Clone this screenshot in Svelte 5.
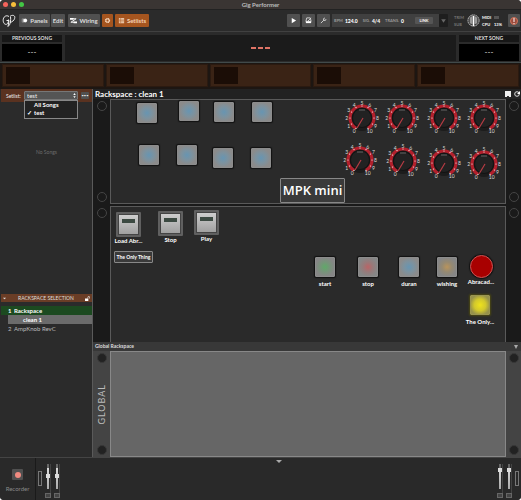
<script>
  let setlist = 'test';
  const setlists = ['All Songs', 'test'];
  const parts = [1, 2, 3, 4, 5];

  // Widgets sit on a free canvas, positions are relative to the panel
  const pads = [
    { x: 26, y: 3 }, { x: 68, y: 1 }, { x: 103, y: 2 }, { x: 141, y: 2 },
    { x: 28, y: 45 }, { x: 66, y: 45 }, { x: 102, y: 48 }, { x: 140, y: 48 }
  ];

  const knobs = [
    { x: 251, y: 18 }, { x: 291, y: 18 }, { x: 333, y: 18 }, { x: 373, y: 18 },
    { x: 249, y: 60 }, { x: 292, y: 61 }, { x: 333, y: 63 }, { x: 373, y: 64 }
  ];

  const switches = [
    { x: 5, y: 5, label: 'Load Abr...' },
    { x: 47, y: 4, label: 'Stop' },
    { x: 83, y: 3, label: 'Play' }
  ];

  const triggers = [
    { x: 204, y: 50, color: 'green', label: 'start' },
    { x: 247, y: 50, color: 'red', label: 'stop' },
    { x: 288, y: 50, color: 'blue', label: 'duran' },
    { x: 326, y: 50, color: 'amber', label: 'wishing' },
    { x: 360, y: 48, color: 'round', label: 'Abracad...' },
    { x: 359, y: 88, color: 'yellow', label: 'The Only...' }
  ];

  const ticks = Array.from({ length: 11 }, (_, i) => {
    const a = ((i * 30 - 150) * Math.PI) / 180;
    return { n: i, sin: Math.sin(a), cos: Math.cos(a) };
  });
</script>

<div class="window">
  <header class="titlebar">
    <span class="light close"></span>
    <span class="light minimize"></span>
    <span class="light zoom"></span>
    <h1>Gig Performer</h1>
  </header>

  <nav class="toolbar">
    <svg class="logo" viewBox="0 0 14 14">
      <path d="M7 2.5C4 .5 1 3 1.200 6.500 1.300 10 4 11.500 5.500 9.500 6.500 8 6.700 6.500 6.500 5.500M4.500 6.500h2.500L6 12.500C8.500 11 9 6 8.500 2.500M8.300 2c3-1.500 5-.3 4.400 2.300C12.200 6.500 10 8 8 8.500" />
    </svg>
    <div class="group">
      <button>
        <svg viewBox="0 0 8 8"><path d="M1 2h5v4H1z" fill="#ddd" /><circle cx="5" cy="4" r="2" fill="#fff" /><path d="M2 2v4" stroke="#555" /></svg>
        Panels
      </button>
      <button class="edit">Edit</button>
    </div>
    <button class="wiring">
      <svg viewBox="0 0 8 8"><path d="M0 1h4v2H0zM4 5h4v2H4z" fill="#fff" /><path d="M3 2h4L1 6h4" stroke="#fff" fill="none" /></svg>
      Wiring
    </button>
    <button class="orange gear" aria-label="Settings">
      <svg viewBox="0 0 8 8"><circle cx="4" cy="4" r="2.300" stroke="#f3d4b8" stroke-width="1.400" fill="none" stroke-dasharray="1.200 .5" /><circle cx="4" cy="4" r="1.700" stroke="#f3d4b8" fill="none" /></svg>
    </button>
    <button class="orange setlists">
      <svg viewBox="0 0 8 8"><path d="M1 1h6v6H1z" fill="#f3d4b8" /><path d="M1 2.500h6M1 4h6M1 5.500h6M3 1v6" stroke="#a5551f" stroke-width=".5" /></svg>
      Setlists
    </button>

    <div class="transport">
      <button aria-label="Play"><svg viewBox="0 0 8 8"><path d="M2 1l5 3-5 3z" fill="#fff" /></svg></button>
      <button aria-label="Metronome"><svg viewBox="0 0 8 8"><path d="M2 1h4l1 4H1z" fill="none" stroke="#ddd" /><path d="M1 5h6v2H1z" fill="#fff" /><path d="M3 5l4-4" stroke="#ddd" /></svg></button>
      <button aria-label="Tuner"><svg viewBox="0 0 8 8"><path d="M1 7l3-3M4 4l.300-2.500M4 4l2.500-.3M4.300 2L5.500 1M6 3.800L7 2.500" stroke="#ddd" fill="none" /></svg></button>
    </div>
    <div class="tempo">
      <span class="key">BPM</span><b>124.0</b>
      <span class="key gap">SIG.</span><b>4/4</b>
      <span class="key gap">TRANS.</span><b>0</b>
      <button class="link">LINK</button>
    </div>
    <button class="more" aria-label="More"><svg viewBox="0 0 6 6"><path d="M1 2h4L3 5z" fill="#666" /></svg></button>
    <div class="status">
      <div class="trim"><span>TRIM</span><span>SUB</span></div>
      <svg class="volume" viewBox="0 0 14 14">
        <circle cx="7" cy="7" r="6" fill="#3c3c3c" stroke="#c8c8c8" stroke-dasharray="2 .5" />
        <path d="M3 10V4l3-2v9zM8 2l3 2v6l-3 1z" fill="#999" />
        <path d="M7 2v11" stroke="#fff" stroke-width="1.500" />
      </svg>
      <div class="meters"><b>MIDI</b><i></i><b>CPU</b><b>13%</b></div>
    </div>
    <button class="panic" aria-label="Panic">
      <svg viewBox="0 0 10 10"><circle cx="5" cy="5" r="3.500" fill="#9b4a3d" stroke="#d0765c" /><path d="M5 2v4M5 7v1" stroke="#fff" /></svg>
    </button>
  </nav>

  <section class="songs">
    <div class="side">
      <h2>PREVIOUS SONG</h2>
      <p>---</p>
    </div>
    <div class="current"><span></span><span></span><span></span></div>
    <div class="side">
      <h2>NEXT SONG</h2>
      <p>---</p>
    </div>
  </section>

  <section class="parts">
    {#each parts as part (part)}
      <div class="part"><span></span></div>
    {/each}
  </section>

  <main>
    <aside>
      <div class="setlist-bar">
        <label for="setlist">Setlist:</label>
        <div class="picker">
          <select id="setlist" bind:value={setlist}>
            {#each setlists as name}
              <option>{name}</option>
            {/each}
          </select>
          <svg viewBox="0 0 4 8"><path d="M0 3l2-3 2 3zM0 5h4L2 8z" fill="#fff" /></svg>
          <ul class="menu">
            {#each setlists as name}
              <li><span>{name === setlist ? '✓' : ''}</span>{name}</li>
            {/each}
          </ul>
        </div>
        <button class="dots" aria-label="Setlist options">•••</button>
      </div>
      <p class="empty">No Songs</p>

      <div class="selection">
        <div class="selection-head">
          <svg viewBox="0 0 6 6"><path d="M1 2h4L3 4z" fill="#ddd" /></svg>
          <h2>RACKSPACE SELECTION</h2>
          <svg viewBox="0 0 6 6"><path d="M0 3h4v3H0z" fill="#fff" /><path d="M3.500 3V1.500a1 1 0 0 1 2 0V3" stroke="#fff" stroke-width=".8" fill="none" /></svg>
        </div>
        <ol>
          <li class="active"><span>1</span>Rackspace</li>
          <li class="variation">clean 1</li>
          <li><span>2</span>AmpKnob RevC</li>
        </ol>
      </div>
    </aside>

    <section class="rackspace">
      <div class="rack-title">
        <h2>Rackspace : clean 1</h2>
        <svg viewBox="0 0 6 6"><path d="M0 0h6v6H0z" fill="#eee" /><path d="M2 5h2v1H2z" fill="#333" /></svg>
        <svg viewBox="0 0 6 6"><circle cx="3" cy="3" r="2.300" stroke="#ddd" fill="none" /><path d="M3 3l3-3v3z" fill="#fff" /></svg>
      </div>

      <div class="rack">
        <div class="ear"><i></i><i></i></div>
        <div class="panel">
          {#each pads as pad}
            <button class="pad blue placed" aria-label="Pad" style="left: {pad.x}px; top: {pad.y}px"></button>
          {/each}
          {#each knobs as knob}
            <svg class="knob" viewBox="-18 -18 36 36" style="left: {knob.x}px; top: {knob.y}px">
              <circle r="13" fill="#1c1c1c" />
              <path d="M-6 10.400A12 12 0 1 1 6 10.400" fill="none" stroke="#b3202c" stroke-width="3.200" />
              <circle r="9.500" fill="#222" stroke="#121212" />
              <path d="M-3 -8h6" stroke="#777" stroke-width=".8" />
              <path d="M1 0L-5 10" stroke="#b83c44" stroke-width="1.200" />
              {#each ticks as t}
                <circle cx={t.sin * 12} cy={-t.cos * 12} r=".6" fill="#fff" />
                <text x={t.sin * 15.4} y={-t.cos * 15.4 + 2}>{t.n}</text>
              {/each}
            </svg>
          {/each}
          <div class="name-plate">MPK mini</div>
        </div>
        <div class="ear"><i></i><i></i></div>
      </div>

      <div class="rack grow">
        <div class="ear"><i></i></div>
        <div class="panel second">
          {#each switches as s}
            <label class="widget switch" style="left: {s.x}px; top: {s.y}px">
              <button aria-label={s.label}><i></i></button>
              {s.label}
            </label>
          {/each}
          <div class="text-plate">The Only Thing</div>
          {#each triggers as t}
            <label class="widget" style="left: {t.x}px; top: {t.y}px">
              <button class="pad {t.color}" aria-label={t.label}></button>
              {t.label}
            </label>
          {/each}
        </div>
        <div class="ear"><i></i></div>
      </div>

      <div class="global-head">
        <h2>Global Rackspace</h2>
        <svg viewBox="0 0 6 6"><path d="M1 1h4L3 5z" fill="#aaa" /></svg>
      </div>
      <div class="rack global">
        <div class="ear"><i></i><span>GLOBAL</span><i></i></div>
        <div class="panel"></div>
        <div class="ear"><i></i><i></i></div>
      </div>
    </section>
  </main>

  <footer>
    <div class="recorder">
      <button aria-label="Record"><i></i></button>
      Recorder
    </div>
    <div class="mixer">
      <span class="tag"></span>
      <div class="fader"><i class="mid"></i><b></b></div>
      <div class="fader"><i class="mid"></i><b></b></div>
    </div>
    <svg class="drawer" viewBox="0 0 6 4"><path d="M0 0h6L3 3z" fill="#aaa" /></svg>
    <div class="mixer">
      <div class="fader"><i></i><b></b></div>
      <div class="fader"><i></i><b></b></div>
      <span class="tag"></span>
    </div>
  </footer>
</div>

<style>
  :global(body) {
    margin: 0;
    background: #fff;
  }

  .window {
    display: flex;
    flex-direction: column;
    min-height: 100vh;
    overflow: hidden;
    border-radius: 4px;
    background: #2b2b2b;
    color: #ddd;
    font: 6px/8px Lato, 'Open Sans', sans-serif;
  }

  .window * {
    box-sizing: border-box;
  }

  h1, h2, p, ul, ol {
    margin: 0;
    padding: 0;
    list-style: none;
    font-size: inherit;
  }

  button, select {
    margin: 0;
    padding: 0;
    border: 0;
    border-radius: 1px;
    background: #505050;
    color: inherit;
    font: inherit;
  }

  /* Title bar */
  .titlebar {
    position: relative;
    display: flex;
    align-items: center;
    gap: 3px;
    height: 10px;
    padding-left: 3px;
    background: #3a3533;
    border-bottom: 1px solid #222;
  }

  .titlebar h1 {
    position: absolute;
    inset: 0;
    text-align: center;
    font-weight: 700;
    line-height: 10px;
    color: #bbb;
  }

  .light {
    width: 5px;
    height: 5px;
    border-radius: 50%;
  }

  .close { background: #f4645c; }
  .minimize { background: #f6bd3b; }
  .zoom { background: #43c645; }

  /* Toolbar */
  .toolbar {
    display: flex;
    align-items: center;
    gap: 2px;
    height: 21px;
    padding: 0 1px 0 2px;
    font-weight: 700;
  }

  .toolbar button {
    display: flex;
    align-items: center;
    justify-content: center;
    gap: 2px;
    height: 13px;
  }

  .toolbar button svg {
    width: 7px;
    height: 7px;
  }

  .toolbar .logo {
    width: 14px;
    height: 14px;
    margin-right: 1px;
    fill: none;
    stroke: #eee;
    stroke-width: 1;
  }

  .group {
    display: flex;
    gap: 1px;
    margin-right: 1px;
  }

  .group button { width: 31px; }
  .group .edit { width: 14px; }
  .wiring { width: 32px; }
  .toolbar .gear { width: 11px; }
  .toolbar .setlists { width: 34px; }

  .toolbar .orange {
    background: #a5551f;
    color: #f3d4b8;
  }

  .transport {
    display: flex;
    gap: 2px;
    margin-left: auto;
  }

  .transport button { width: 13px; }

  .tempo {
    display: flex;
    align-items: center;
    gap: 2px;
    width: 107px;
    height: 13px;
    padding: 0 6px 0 2px;
    background: #404040;
    font-size: 5px;
    color: #fff;
  }

  .key {
    font-size: 4px;
    color: #999;
  }

  .gap { margin-left: 3px; }

  .tempo .link {
    width: 18px;
    height: 7px;
    margin-left: auto;
    background: #555;
    font-size: 4px;
  }

  .toolbar .more {
    width: 9px;
    margin-left: -2px;
    background: #1e1e1e;
  }

  .status {
    display: flex;
    align-items: center;
    gap: 2px;
    width: 56px;
    padding-left: 4px;
    font-size: 4px;
    line-height: 7px;
  }

  .trim {
    display: flex;
    flex-direction: column;
    width: 11px;
    color: #777;
  }

  .volume {
    width: 13px;
    height: 13px;
  }

  .meters {
    display: grid;
    grid-template-columns: 10px 9px;
    align-items: center;
    gap: 0 2px;
    color: #eee;
  }

  .meters i {
    width: 5px;
    height: 3px;
    background: #555;
  }

  .toolbar .panic { width: 12px; }
  .toolbar .panic svg {
    width: 10px;
    height: 10px;
  }

  /* Songs row */
  .songs {
    display: grid;
    grid-template-columns: 60px 1fr 60px;
    gap: 3px;
    height: 32px;
    padding: 3px 2px 2px;
    border-top: 1px solid #414141;
    border-bottom: 1px solid #414a4a;
    text-align: center;
  }

  .side {
    display: grid;
    grid-template-rows: 7px 1fr;
    gap: 2px;
    font-size: 5px;
    line-height: 7px;
  }

  .side h2 {
    background: #171717;
    font-weight: 700;
  }

  .side p {
    background: #000;
    font-size: 8px;
    line-height: 17px;
  }

  .current {
    display: flex;
    align-items: center;
    justify-content: center;
    gap: 2px;
    background: #1b1b1b;
  }

  .current span {
    width: 5px;
    height: 2px;
    background: #e07466;
  }

  /* Song parts */
  .parts {
    display: grid;
    grid-template-columns: repeat(5, 1fr);
    gap: 2px;
    height: 26px;
    padding: 1px 2px 2px;
    background: #1d1612;
  }

  .part {
    padding: 2px 3px;
    background: #3a2315;
    border: 1px solid #2b1a10;
  }

  .part span {
    display: block;
    width: 24px;
    height: 17px;
    background: #1b0d06;
  }

  main {
    display: grid;
    grid-template-columns: 92px 1fr;
    flex: 1;
  }

  /* Sidebar */
  aside {
    display: flex;
    flex-direction: column;
    padding-left: 1px;
  }

  .setlist-bar {
    display: flex;
    align-items: center;
    gap: 3px;
    height: 13px;
    padding-left: 5px;
    background: #5a3220;
    color: #eee;
  }

  .setlist-bar label {
    width: 15px;
    font-size: 5px;
  }

  .picker {
    position: relative;
    width: 54px;
    height: 9px;
  }

  .picker select {
    display: block;
    width: 100%;
    height: 9px;
    padding-left: 2px;
    appearance: none;
    background: #555;
    border: 1px solid #777;
    line-height: 7px;
  }

  .picker > svg {
    position: absolute;
    top: 2px;
    right: 2px;
    width: 3px;
    height: 5px;
  }

  .menu {
    position: absolute;
    top: 9px;
    left: 0;
    right: 0;
    padding: 0 0 1px;
    background: #222;
    border: 1px solid #888;
    color: #fff;
    font-weight: 700;
  }

  .menu li {
    display: flex;
  }

  .menu span {
    width: 9px;
    padding-left: 2px;
  }

  .dots {
    width: 8px;
    height: 7px;
    font-size: 4px;
    line-height: 7px;
  }

  .empty {
    padding-top: 46px;
    text-align: center;
    color: #6c6c6c;
    font-size: 5px;
  }

  .selection {
    height: 163px;
    margin-top: auto;
  }

  .selection-head {
    display: flex;
    align-items: center;
    justify-content: space-between;
    height: 8px;
    margin-bottom: 4px;
    padding: 0 2px 0 1px;
    background: #6a3d26;
    font-size: 5px;
  }

  .selection-head h2 { font-weight: 400; }

  .selection-head svg {
    width: 5px;
    height: 5px;
  }

  ol li {
    height: 9px;
    padding-left: 7px;
    line-height: 9px;
    color: #bbb;
  }

  ol span {
    display: inline-block;
    width: 6px;
  }

  ol .active {
    background: #1c4a20;
    font-weight: 700;
    color: #fff;
  }

  ol .variation {
    margin-left: 7px;
    padding-left: 15px;
    background: #6b6b6b;
    font-weight: 700;
    color: #fff;
  }

  /* Rackspace */
  .rackspace {
    display: flex;
    flex-direction: column;
    border-left: 1px solid #5a5a5a;
    background: #1a1a1a;
  }

  .rack-title {
    display: flex;
    align-items: center;
    gap: 3px;
    height: 10px;
    padding: 0 1px 0 2px;
    background: #222;
    color: #fff;
    font-size: 8px;
    line-height: 10px;
  }

  .rack-title h2 { margin-right: auto; }

  .rack-title svg {
    width: 6px;
    height: 6px;
  }

  .rack {
    display: grid;
    grid-template-columns: 17px 1fr 15px;
    height: 105px;
    margin-bottom: 2px;
  }

  .grow {
    flex: 1;
    height: auto;
    min-height: 136px;
    margin: 0;
  }

  .ear {
    display: flex;
    flex-direction: column;
    align-items: center;
    justify-content: space-between;
    padding: 2px 0;
  }

  .ear i {
    width: 10px;
    height: 10px;
    border: 1px solid #454545;
    border-radius: 50%;
    background: #1a1a1a;
  }

  .panel {
    position: relative;
    background: #2a2a2a;
    border: 1px solid #5a5a5a;
  }

  .second { border-bottom: 0; }

  .pad {
    width: 20px;
    height: 20px;
    border: 1px solid #8c8c8c;
    border-radius: 1px;
    box-shadow: 0 0 1px 1px #111;
  }

  .placed { position: absolute; }

  .blue { background: radial-gradient(circle, #6795b2, #7c929f 40%, #8b8b8b 75%); }
  .green { background: radial-gradient(circle, #5fa968, #77937a 40%, #868686 75%); }
  .red { background: radial-gradient(circle, #ba6466, #967a7a 40%, #868686 75%); }
  .amber { background: radial-gradient(circle, #b9945c, #958972 40%, #868686 75%); }

  .yellow {
    background: radial-gradient(circle, #eee21c, #d2c82c 45%, #96914b 80%);
    border-color: #9a9550;
    box-shadow: 0 0 2px 1px #4a4710;
  }

  .round {
    width: 23px;
    height: 23px;
    background: #a80000;
    border: 1px solid #cc5555;
    border-radius: 50%;
  }

  .knob {
    position: absolute;
    width: 36px;
    height: 36px;
    margin: -18px;
  }

  .knob text {
    fill: #ddd;
    font-size: 5px;
    text-anchor: middle;
  }

  .name-plate,
  .text-plate {
    position: absolute;
    background: #3a3a3a;
    border: 1px solid #888;
    border-radius: 1px;
    color: #fff;
    text-align: center;
    white-space: nowrap;
  }

  .name-plate {
    left: 169px;
    top: 78px;
    width: 65px;
    font: 600 13px/23px 'Open Sans', sans-serif;
  }

  .text-plate {
    left: 3px;
    top: 44px;
    width: 39px;
    font-size: 5px;
    font-weight: 700;
    line-height: 10px;
  }

  .widget {
    position: absolute;
    display: flex;
    flex-direction: column;
    align-items: center;
    gap: 3px;
    width: 20px;
    color: #fff;
    font-weight: 700;
    white-space: nowrap;
  }

  .widget .round { margin-bottom: -3px; }

  .switch {
    width: 25px;
    gap: 0;
  }

  .switch button {
    width: 25px;
    height: 25px;
    padding: 3px 4px;
    border: 2px solid #606060;
    background: linear-gradient(#d0d0d0, #9e9e9e);
    box-shadow: inset 0 0 0 1px #444;
  }

  .switch i {
    display: block;
    height: 4px;
    margin-bottom: 8px;
    background: #3c4a42;
  }

  .global-head {
    display: flex;
    align-items: center;
    justify-content: space-between;
    height: 9px;
    padding: 0 2px;
    background: #383838;
    font-size: 5px;
    line-height: 9px;
  }

  .global-head svg {
    width: 6px;
    height: 6px;
  }

  .global {
    height: 106px;
    margin: 0;
    background: #444;
  }

  .global .ear i {
    background: #222;
    border-color: #383838;
  }

  .global .ear span {
    writing-mode: vertical-rl;
    transform: rotate(180deg);
    font-size: 9px;
    line-height: 11px;
    letter-spacing: 1px;
    color: #bbb;
  }

  .global .panel {
    background: #666;
    border-color: #888;
  }

  /* Footer */
  footer {
    display: flex;
    justify-content: space-between;
    height: 43px;
    border-top: 1px solid #444;
    background: #292929;
  }

  .recorder {
    display: flex;
    flex-direction: column;
    align-items: center;
    gap: 5px;
    width: 36px;
    padding-top: 11px;
    border-right: 1px solid #1a1a1a;
    color: #888;
  }

  .recorder button {
    display: grid;
    place-items: center;
    width: 11px;
    height: 11px;
  }

  .recorder i {
    width: 6px;
    height: 6px;
    border-radius: 50%;
    background: #f08a80;
  }

  .mixer {
    display: flex;
    gap: 3px;
    padding: 6px 2px 2px;
  }

  .tag {
    width: 4px;
    height: 15px;
    margin-top: 7px;
    border: 1px solid #777;
  }

  .fader {
    display: flex;
    flex-direction: column;
    align-items: center;
    justify-content: space-between;
    width: 6px;
    border-right: 1px solid #444;
  }

  .fader i {
    width: 2px;
    height: 25px;
    background: linear-gradient(#666 4px, #ddd 4px, #aaa);
    position: relative;
  }

  .fader i::after {
    content: '';
    position: absolute;
    left: -1px;
    top: 4px;
    width: 4px;
    height: 4px;
    background: #ddd;
  }

  .fader .mid::after { top: 10px; }

  .fader b {
    width: 6px;
    height: 5px;
    border: 1px solid #666;
    background: #444;
  }

  .drawer {
    width: 6px;
    height: 4px;
    margin: 2px auto;
  }
</style>
